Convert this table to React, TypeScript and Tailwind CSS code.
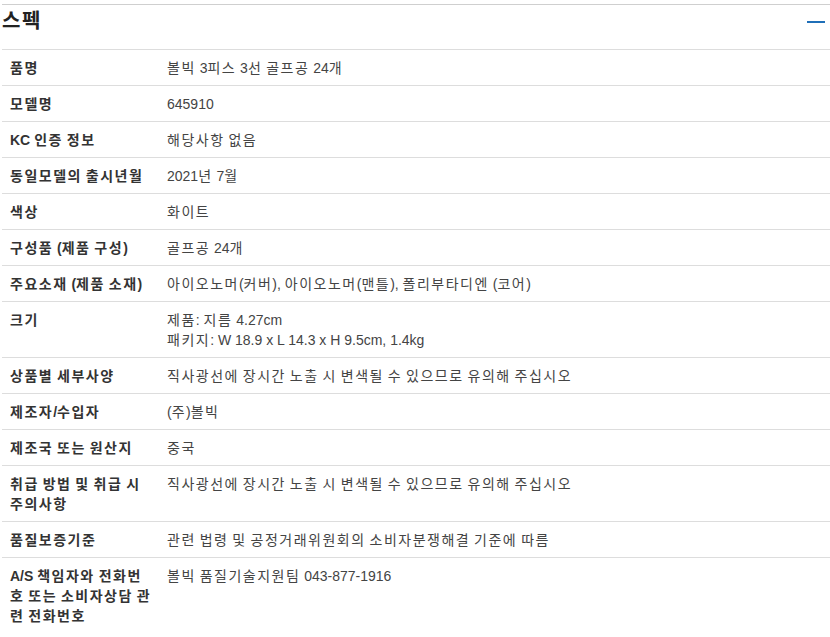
import React from "react";

interface SpecRow {
  label: string;
  value: string[];
}

const rows: SpecRow[] = [
  { label: "품명", value: ["볼빅 3피스 3선 골프공 24개"] },
  { label: "모델명", value: ["645910"] },
  { label: "KC 인증 정보", value: ["해당사항 없음"] },
  { label: "동일모델의 출시년월", value: ["2021년 7월"] },
  { label: "색상", value: ["화이트"] },
  { label: "구성품 (제품 구성)", value: ["골프공 24개"] },
  { label: "주요소재 (제품 소재)", value: ["아이오노머(커버), 아이오노머(맨틀), 폴리부타디엔 (코어)"] },
  { label: "크기", value: ["제품: 지름 4.27cm", "패키지: W 18.9 x L 14.3 x H 9.5cm, 1.4kg"] },
  { label: "상품별 세부사양", value: ["직사광선에 장시간 노출 시 변색될 수 있으므로 유의해 주십시오"] },
  { label: "제조자/수입자", value: ["(주)볼빅"] },
  { label: "제조국 또는 원산지", value: ["중국"] },
  { label: "취급 방법 및 취급 시\n주의사항", value: ["직사광선에 장시간 노출 시 변색될 수 있으므로 유의해 주십시오"] },
  { label: "품질보증기준", value: ["관련 법령 및 공정거래위원회의 소비자분쟁해결 기준에 따름"] },
  { label: "A/S 책임자와 전화번\n호 또는 소비자상담 관\n련 전화번호", value: ["볼빅 품질기술지원팀 043-877-1916"] },
];

const ko = (text: string) =>
  text.split(/([\uAC00-\uD7A3]+)/).map((part, i) =>
    /[\uAC00-\uD7A3]/.test(part) ? (
      <span key={i} className="tracking-[1.5px]">
        {part}
      </span>
    ) : (
      part
    )
  );

export default function App() {
  return (
    <div
      className="w-[830px] bg-white pt-1 pl-[2px]"
      style={{ fontFamily: '"Liberation Sans", "Noto Sans CJK KR", sans-serif' }}
    >
      <div className="border-t border-[#cfcfcf]">
        {/* Header */}
        <div className="flex h-[45px] items-start justify-between border-b border-[#dddddd]">
          <h2 className="pt-[4px] text-[20px] font-bold leading-[24px] text-[#222]">{ko("스펙")}</h2>
          <span className="mr-[5px] mt-[16px] block h-[2px] w-[18px] bg-[#1f6fb8]" />
        </div>

        {/* Spec table */}
        <table className="w-full border-collapse text-[14px] leading-[20px]">
          <tbody>
            {rows.map((row, i) => (
              <tr
                key={row.label}
                className={i < rows.length - 1 ? "border-b border-[#dddddd]" : ""}
              >
                <td className="w-[165px] whitespace-pre-line pt-2 pb-[7px] pl-2 pr-[15px] align-top font-bold text-[#333]">
                  {ko(row.label)}
                </td>
                <td className="pt-2 pb-[7px] align-top text-[#444]">
                  {row.value.map((line) => (
                    <div key={line}>{ko(line)}</div>
                  ))}
                </td>
              </tr>
            ))}
          </tbody>
        </table>
      </div>
    </div>
  );
}
